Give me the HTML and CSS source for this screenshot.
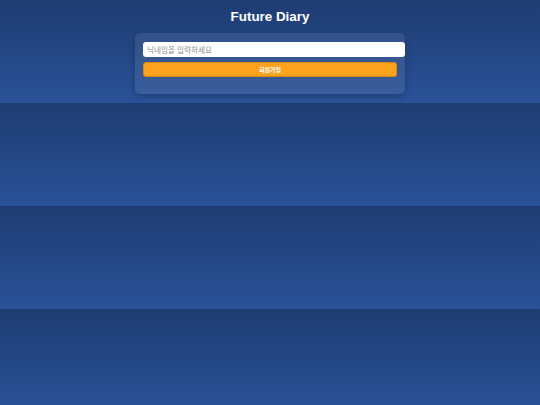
FILE: index.html
```html
<html lang="ko">

<head>
	<title>Future Diary</title>
	<meta charset="utf-8">
	<meta name="viewport" content="width=device-width, initial-scale=1.0">
	<link rel="stylesheet" href="styles.css">
</head>

<body>
	<div class="app">
		<h1 class="title">Future Diary</h1>

		<div class="card">
			<input class="nickname" type="text" placeholder="닉네임을 입력하세요">
			<button class="join">회원가입</button>
		</div>
	</div>
</body>
</html>
```

FILE: styles.css
```css
html, body {
	margin: 0;
	padding: 0;
}

html {
	background: linear-gradient(to bottom, #1e3c72, #2a5298);
	background-size: 100% 103px;
	background-repeat: repeat;
}

body {
	font-family: "Liberation Sans", "Noto Sans CJK KR", sans-serif;
	color: #fff;
}

.app {
	padding: 8px 0 9px 0;
}

.title {
	margin: 0 0 8px 0;
	font-size: 13.4px;
	line-height: 17px;
	text-align: center;
	color: #fff;
}

.card {
	width: 254px;
	margin: 0 auto;
	padding: 9px 8px 17px 8px;
	background: rgba(255, 255, 255, 0.08);
	border-radius: 5px;
	box-shadow: 0 2px 6px rgba(0, 0, 0, 0.25);
}

.nickname {
	display: block;
	box-sizing: content-box;
	width: 100%;
	height: 15px;
	padding: 0 4px;
	margin: 0 0 5px 0;
	border: none;
	border-radius: 3px;
	background: #fff;
	font-family: "Noto Sans CJK KR", sans-serif;
	font-size: 7.6px;
	color: #333;
	outline: none;
}

.nickname::placeholder {
	color: #8f8f8f;
}

.join {
	display: block;
	width: 100%;
	height: 15px;
	padding: 0;
	border: 1px solid #d98a14;
	border-radius: 3px;
	background: #fca21d;
	color: #fff;
	font-family: "Noto Sans CJK KR", sans-serif;
	font-size: 6px;
	font-weight: bold;
	box-sizing: border-box;
}
```
